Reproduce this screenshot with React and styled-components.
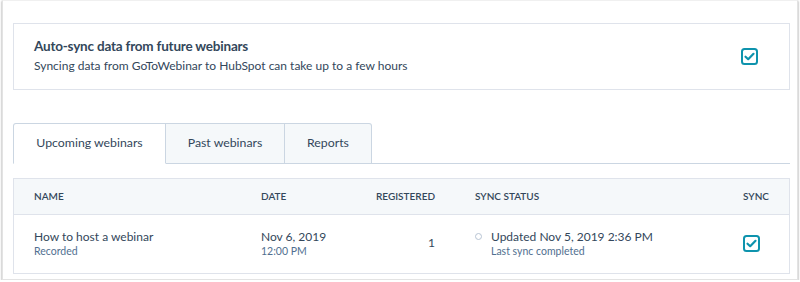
import React from 'react';
import styled, { createGlobalStyle } from 'styled-components';

const GlobalStyle = createGlobalStyle`
  body {
    margin: 0;
    background: #ffffff;
    font-family: Lato, "Liberation Sans", sans-serif;
    color: #33475b;
  }
`;

const Frame = styled.div`
  box-sizing: border-box;
  width: 796px;
  height: 280px;
  margin-left: 2px;
  padding: 22px 7px 0 10px;
  border: 1px solid #e3e3e3;
  border-top-color: #f0f0f0;
  box-shadow: 0 1px 2px rgba(0, 0, 0, 0.45);
  background: #ffffff;
  overflow: hidden;
`;

const Card = styled.div`
  box-sizing: border-box;
  height: 67px;
  border: 1px solid #dfe3eb;
  padding: 0 31px 0 20px;
  display: flex;
  align-items: center;
  justify-content: space-between;
`;

const CardText = styled.div`
  display: flex;
  flex-direction: column;
  gap: 4px;
  padding-bottom: 2px;
`;

const Title = styled.div`
  font-size: 13.5px;
  font-weight: 700;
  letter-spacing: -0.2px;
  color: #33475b;
`;

const Subtitle = styled.div`
  font-size: 12px;
  color: #33475b;
`;

const Tabs = styled.div`
  display: flex;
  margin-top: 33px;
  border-bottom: 1px solid #cbd6e2;
`;

const Tab = styled.div`
  box-sizing: border-box;
  height: 41px;
  margin-bottom: -1px;
  padding-bottom: 2px;
  width: ${(p) => p.$w}px;
  display: flex;
  align-items: center;
  justify-content: center;
  font-size: 12.3px;
  color: #33475b;
  background: ${(p) => (p.$active ? '#ffffff' : '#f5f8fa')};
  border: 1px solid #cbd6e2;
  border-left-width: ${(p) => (p.$first ? 1 : 0)}px;
  border-bottom-color: ${(p) => (p.$active ? '#ffffff' : '#cbd6e2')};
  border-radius: ${(p) => (p.$last ? '0 3px 0 0' : p.$first ? '3px 0 0 0' : '0')};
`;

const Table = styled.div`
  margin-top: 14px;
  border: 1px solid #dfe3eb;
  border-bottom: 0;
`;

const Row = styled.div`
  box-sizing: border-box;
  display: grid;
  grid-template-columns: 227px 115px 59px 40px 1fr 27px;
  align-items: center;
  padding: 0 19px 0 20px;
  height: ${(p) => (p.$head ? 36 : 59)}px;
  background: ${(p) => (p.$head ? '#f5f8fa' : '#ffffff')};
  border-bottom: 1px solid #dfe3eb;
`;

const HeadCell = styled.div`
  font-size: 10px;
  font-weight: 600;
  text-transform: uppercase;
  color: #33475b;
  padding-bottom: 1px;
  text-align: ${(p) => (p.$right ? 'right' : 'left')};
`;

const Cell = styled.div`
  display: flex;
  flex-direction: column;
  gap: 1px;
  align-items: ${(p) => (p.$right ? 'flex-end' : 'flex-start')};
  padding-bottom: 3px;
`;

const Main = styled.div`
  font-size: 12px;
  color: #33475b;
`;

const Sub = styled.div`
  font-size: 10.5px;
  color: #516f90;
`;

const Status = styled.div`
  display: flex;
  align-items: flex-start;
  gap: 9px;
`;

const Dot = styled.span`
  box-sizing: border-box;
  width: 7px;
  height: 7px;
  margin-top: 4px;
  border-radius: 50%;
  border: 1px solid #b7c4d3;
`;

const SyncCell = styled.div`
  justify-self: start;
  display: flex;
  padding-bottom: 1px;
`;

const CheckBox = () => (
  <svg width="17" height="17" viewBox="0 0 17 17">
    <rect x="1" y="1" width="15" height="15" rx="2.5" fill="#ffffff" stroke="#0e93ad" strokeWidth="2" />
    <path d="M4.5 8.7 L7.2 11.2 L12.5 5.8" fill="none" stroke="#0e93ad" strokeWidth="2.2" strokeLinecap="round" strokeLinejoin="round" />
  </svg>
);

const App = () => {
  return (
    <>
      <GlobalStyle />
      <Frame>
        <Card>
          <CardText>
            <Title>Auto-sync data from future webinars</Title>
            <Subtitle>Syncing data from GoToWebinar to HubSpot can take up to a few hours</Subtitle>
          </CardText>
          <CheckBox />
        </Card>
        <Tabs>
          <Tab $w={153} $active $first>Upcoming webinars</Tab>
          <Tab $w={119}>Past webinars</Tab>
          <Tab $w={87} $last>Reports</Tab>
        </Tabs>
        <Table>
          <Row $head>
            <HeadCell>Name</HeadCell>
            <HeadCell>Date</HeadCell>
            <HeadCell $right>Registered</HeadCell>
            <span />
            <HeadCell>Sync status</HeadCell>
            <HeadCell>Sync</HeadCell>
          </Row>
          <Row>
            <Cell>
              <Main>How to host a webinar</Main>
              <Sub>Recorded</Sub>
            </Cell>
            <Cell>
              <Main>Nov 6, 2019</Main>
              <Sub>12:00 PM</Sub>
            </Cell>
            <Cell $right>
              <Main>1</Main>
            </Cell>
            <span />
            <Status>
              <Dot />
              <Cell>
                <Main>Updated Nov 5, 2019 2:36 PM</Main>
                <Sub>Last sync completed</Sub>
              </Cell>
            </Status>
            <SyncCell>
              <CheckBox />
            </SyncCell>
          </Row>
        </Table>
      </Frame>
    </>
  );
};

export default App;
